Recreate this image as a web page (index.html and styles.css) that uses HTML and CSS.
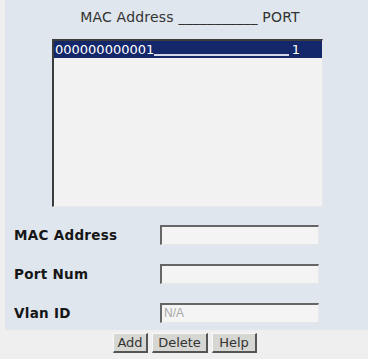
FILE: index.html
```html
<!DOCTYPE html>
<html>
<head>
<meta charset="utf-8">
<link rel="stylesheet" href="styles.css">
</head>
<body>
<div class="panel">
  <div class="heading">MAC Address ___________ PORT</div>
  <div class="listbox">
    <div class="item selected">
      <span class="mac">000000000001</span>
      <span class="fill"></span>
      <span class="port">1</span>
    </div>
  </div>
  <div class="form">
    <div class="row">
      <label class="label">MAC Address</label>
      <input class="field" type="text">
    </div>
    <div class="row">
      <label class="label">Port Num</label>
      <input class="field" type="text">
    </div>
    <div class="row">
      <label class="label">Vlan ID</label>
      <input class="field disabled" type="text" value="N/A" disabled>
    </div>
  </div>
</div>
<div class="buttons">
  <button class="btn btn-add">Add</button>
  <button class="btn btn-delete">Delete</button>
  <button class="btn btn-help">Help</button>
</div>
</body>
</html>
```
FILE: styles.css
```css
html, body {
  margin: 0;
  padding: 0;
  background: #efefef;
  width: 368px;
  height: 359px;
  overflow: hidden;
  font-family: "DejaVu Sans", Verdana, sans-serif;
}
.panel {
  margin-left: 5px;
  height: 330px;
  background: #dfe6ee;
  box-sizing: border-box;
  padding-top: 7px;
}
.heading {
  font-size: 14px;
  line-height: 20px;
  color: #333;
  text-align: center;
  padding-left: 7px;
  letter-spacing: 0.2px;
}
.listbox {
  margin-top: 12px;
  margin-left: 47px;
  width: 271px;
  height: 168px;
  box-sizing: border-box;
  background: #f2f2f2;
  border-top: 2px solid #3c3c3c;
  border-left: 2px solid #3c3c3c;
  border-right: 1px solid #e8e8e8;
  border-bottom: 1px solid #e8e8e8;
}
.item {
  display: flex;
  align-items: flex-end;
  height: 17px;
  font-size: 13px;
  line-height: 16px;
  padding-left: 1px;
  padding-right: 22px;
}
.item.selected {
  background: #15276b;
  color: #ffffff;
}
.fill {
  flex: 1;
  border-bottom: 2px solid #d4d8e6;
  margin-bottom: 2px;
  margin-right: 3px;
}
.form {
  margin-top: 17px;
  display: flex;
  flex-direction: column;
  gap: 18px;
}
.row {
  display: flex;
  align-items: center;
  height: 21px;
}
.label {
  width: 155px;
  padding-left: 9px;
  box-sizing: border-box;
  font-weight: bold;
  font-size: 13.5px;
  color: #161616;
  letter-spacing: 0.3px;
}
.field {
  width: 159px;
  height: 20px;
  box-sizing: border-box;
  margin: 0;
  padding: 0 2px;
  background: #f4f4f4;
  border-top: 2px solid #666;
  border-left: 2px solid #666;
  border-right: 1px solid #e6e6e6;
  border-bottom: 1px solid #e6e6e6;
  font-family: "Liberation Sans", Arial, sans-serif;
  font-size: 12px;
  outline: none;
}
.field.disabled {
  color: #a8a8a8;
  background: #f4f4f4;
}
.buttons {
  display: flex;
  justify-content: center;
  gap: 4px;
  margin-top: 3px;
  padding-left: 2px;
}
.btn {
  height: 20px;
  margin: 0;
  padding: 0 5px;
  box-sizing: border-box;
  background: #d6d6d2;
  font-family: "DejaVu Sans", Verdana, sans-serif;
  font-size: 13px;
  color: #333;
  line-height: 16px;
  border-top: 1px solid #f8f8f8;
  border-left: 1px solid #f8f8f8;
  border-right: 2px solid #555;
  border-bottom: 2px solid #555;
}
.btn-add { width: 35px; padding: 0 2px; }
.btn-delete { width: 56px; }
.btn-help { width: 45px; }
```
